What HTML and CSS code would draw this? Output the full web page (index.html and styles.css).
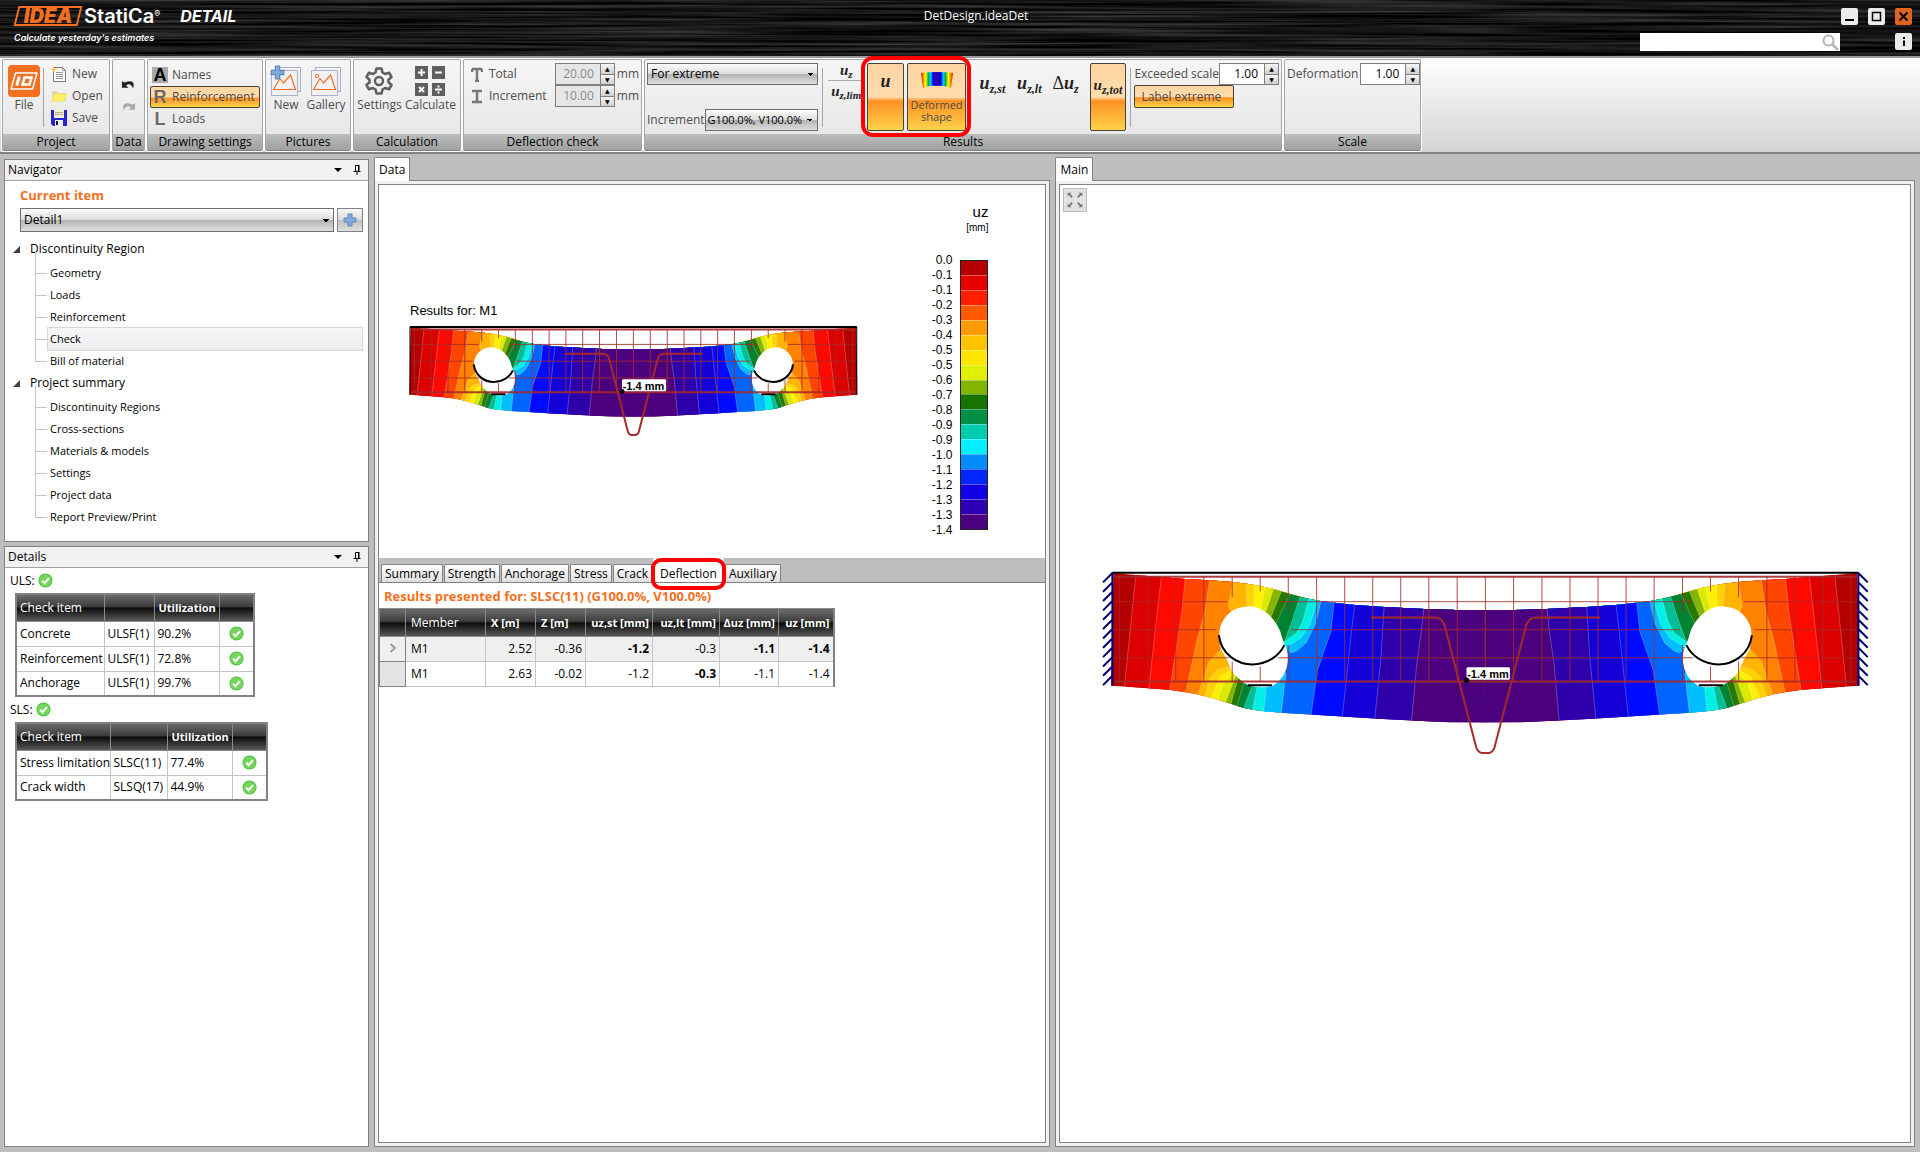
FILE: index.html
```html
<!DOCTYPE html>
<html lang="en">
<head>
<meta charset="utf-8">
<title>DetDesign.ideaDet</title>
<link rel="stylesheet" href="styles.css">
</head>
<body>
<svg class="defs" aria-hidden="true">
  <defs>
    <clipPath id="body-clip">
      <path d="M73,70 L140,76 217,82 290,88 361,92 430,97 472,102 515,110 552,118 580,126 612,136 650,146 692,154 735,159 797,166 884,172 1004,178 1100,181 H1189 V518 L1080,517 966,512 854,506 758,500 664,494 575,489 523,484 490,480 460,474 442,468 425,462 408,457 386,450 362,443 323,433 290,427 240,420 178,415 105,410 66,408 Z"/>
    </clipPath>
    <g id="half-beam">
      <g clip-path="url(#body-clip)">
        <path fill="#b40000" d="M60,60H1200V530H60z"/>
        <g class="bands">
          <path fill="#dc0000" d="M141,60 L139,90 105,420 H1200 V60z"/>
          <path fill="#ff0a00" d="M218,60 L216,90 207,165 178,425 H1200 V60z"/>
          <path fill="#ff4600" d="M291,60 L288,90 278,190 240,430 H1200 V60z"/>
          <path fill="#ff8200" d="M362,60 L360,100 346,190 325,265 287,440 H1200 V60z"/>
          <path fill="#ffb400" d="M432,60 L430,97 418,170 480,290 396,297 360,335 323,445 H1200 V60z"/>
          <path fill="#ffd200" d="M470,60 V102 L476,180 500,290 422,351 385,360 362,385 345,450 H1200 V60z"/>
          <path fill="#fff000" d="M496,60 V106 L492,180 500,290 425,362 395,378 362,450 H1200 V60z"/>
          <path fill="#dcea00" d="M530,60 L527,112 514,180 500,290 430,374 402,398 384,458 H1200 V60z"/>
          <path fill="#82b400" d="M553,60 V118 L530,185 500,290 440,376 406,466 H1200 V60z"/>
          <path fill="#287800" d="M576,60 V126 L544,205 500,290 447,385 423,470 H1200 V60z"/>
          <path fill="#008232" d="M602,60 V132 L560,222 500,290 467,390 440,478 H1200 V60z"/>
          <path fill="#00be96" d="M634,60 L632,141 608,215 584,280 500,300 490,405 460,484 H1200 V60z"/>
          <path fill="#00f0e6" d="M662,60 L658,148 640,215 622,250 585,276 500,300 505,405 488,490 H1200 V60z"/>
          <path fill="#00beff" d="M688,60 L684,152 662,225 635,265 590,292 500,300 532,400 522,496 H1200 V60z"/>
          <path fill="#0064ff" d="M700,60 L695,155 680,220 650,280 622,304 605,309 594,300 500,310 590,370 575,500 H1200 V60z"/>
          <path fill="#000aff" d="M737,60 L734,160 725,245 685,360 664,504 H1200 V60z"/>
          <path fill="#1400d7" d="M799,60 L796,166 787,240 758,510 H1200 V60z"/>
          <path fill="#2d00aa" d="M884,60 V172 L875,320 854,530 H1200 V60z"/>
          <path fill="#4b007d" d="M1003,60 V178 L995,250 982,340 965,530 H1200 V60z"/>
        </g>
        <path fill="#fff" d="M475,170 C515,168 555,200 573,245 Q580,270 586,285 Q598,305 596,335 Q590,385 552,407 Q525,418 478,407 Q450,392 428,364 Q412,325 396,300 Q386,262 393,232 C405,195 435,170 475,170z"/>
      </g>
      <path class="outline" d="M389,256 C396,315 445,344 490,344 C535,343 570,318 585,286 M476,406 H548"/>
      <path class="grid" d="M92,80V395 M176,80V395 M260,80V395 M344,80V395 M429,80V142 M429,335V395 M513,80V125 M513,350V395 M597,80V190 M597,285V395 M682,80V395 M766,80V395 M850,80V395 M934,80V395 M1018,80V395 M1103,80V395 M78,156H414 M568,156H1188 M78,240H382 M605,240H1188 M78,324H420 M565,324H1188"/>
      <path class="bar" d="M78,81H1188 M78,395H1188"/>
      <path class="tendon" d="M844,203 H1035 Q1060,203 1067,233 L1160,592 Q1165,608 1177,609 H1188"/>
    </g>
    <g id="beam">
      <use href="#half-beam"/>
      <use href="#half-beam" transform="translate(2375 0) scale(-1 1)"/>
      <path class="grid" d="M1187.500,80V395"/>
      <path class="outline" d="M70,69H2305"/>
    </g>
    <g id="support">
      <path class="hinge" d="M70,68V408 M70,70L42,98 M70,98L42,126 M70,126L42,154 M70,154L42,182 M70,182L42,210 M70,210L42,238 M70,238L42,266 M70,266L42,294 M70,294L42,322 M70,322L42,350 M70,350L42,378 M70,378L42,406"/>
    </g>
    <symbol id="ok" viewBox="0 0 16 16">
      <circle cx="8" cy="8" r="7.500" fill="#4cc13c"/>
      <circle cx="8" cy="8" r="6.500" fill="#76d65c"/>
      <path d="M4.500,8.200L7,10.800L11.700,5.500" fill="none" stroke="#fff" stroke-width="2.200"/>
    </symbol>
    <symbol id="pin" viewBox="0 0 10 12">
      <path d="M3.500,7V1.500H6.500V7M1.500,7.500H8.500M5,8V11" fill="none" stroke="#000"/><path d="M6,1H7.500V7H6z"/>
    </symbol>
    <symbol id="picture" viewBox="0 0 32 32">
      <path d="M5.500,5.500V2.500H30.500V26.500H27.500" fill="none" stroke="#a9afc4"/>
      <path d="M1.500,5.500H27.500V30.500H1.500z" fill="#f1f1f4" stroke="#a9afc4"/>
      <path d="M3.500,24.500L10,13.500L13.500,18L20.500,10L25.500,24.500z" fill="none" stroke="#f36f21" stroke-width="1.200"/>
    </symbol>
    <symbol id="plus" viewBox="0 0 14 14">
      <path d="M5,1H9V5H13V9H9V13H5V9H1V5H5z" fill="#7fabdc" stroke="#5b87bd"/>
    </symbol>
  </defs>
</svg>

<header class="titlebar">
  <svg class="brushed" aria-hidden="true">
    <filter id="brush" x="0" y="0" width="100%" height="100%" color-interpolation-filters="sRGB">
      <feTurbulence type="fractalNoise" baseFrequency="0.004 0.350" numOctaves="3" seed="5"/>
      <feColorMatrix values="0.420 0 0 0 -0.120 0.420 0 0 0 -0.120 0.420 0 0 0 -0.120 0 0 0 0 1"/>
    </filter>
    <rect width="100%" height="100%" filter="url(#brush)"/>
  </svg>
  <div class="brand">
    <div class="brand-line"><span class="logo-box">IDEA</span><span class="logo-name">StatiCa<sup>®</sup></span><span class="logo-app">DETAIL</span></div>
    <div class="tagline">Calculate yesterday's estimates</div>
  </div>
  <h1 class="doc-title">DetDesign.ideaDet</h1>
  <div class="window-tools">
    <div class="window-row">
      <button class="win" aria-label="Minimize"><svg viewBox="0 0 17 17"><path d="M4,12H13" stroke="#000" stroke-width="2"/></svg></button>
      <button class="win" aria-label="Maximize"><svg viewBox="0 0 17 17"><path d="M4.500,4.500H12.500V12.500H4.500z" fill="none" stroke="#000" stroke-width="1.500"/></svg></button>
      <button class="win win-close" aria-label="Close"><svg viewBox="0 0 17 17"><path d="M4.500,4.500L12.500,12.500M12.500,4.500L4.500,12.500" stroke="#000" stroke-width="2"/></svg></button>
    </div>
    <div class="window-row search-row">
      <label class="search"><input type="text" aria-label="Search"><svg viewBox="0 0 17 17"><circle cx="6.500" cy="6.500" r="5" fill="none" stroke="#b4b4b4" stroke-width="2"/><path d="M10,10L16,16" stroke="#b4b4b4" stroke-width="2.500"/></svg></label>
      <button class="win" aria-label="Info"><svg viewBox="0 0 17 17"><path d="M9,4V6M9,7.500V13" stroke="#000" stroke-width="2"/></svg></button>
    </div>
  </div>
</header>

<section class="ribbon" aria-label="Ribbon">
  <section class="group g-project">
    <div class="group-body">
      <button class="big"><svg viewBox="0 0 32 32"><rect width="32" height="32" rx="4" fill="#f36f21"/><path d="M7.500,8H29L24.500,24H3z" fill="none" stroke="#fff" stroke-width="1.500" stroke-linejoin="round"/><path d="M11.300,11.500L8.800,20.500" stroke="#fff" stroke-width="3"/><path d="M16.500,12.500H23.500L21.500,19.500H14.500z" fill="none" stroke="#fff" stroke-width="2.600"/></svg>File</button>
      <span class="sep"></span>
      <div class="stack">
        <button class="small"><svg viewBox="0 0 16 16"><path d="M2.500,1.500H11.500L14.500,4.500V15.500H2.500z" fill="#fafafa" stroke="#777"/><path d="M11.500,1.500V4.500H14.500M5,6.500H12M5,8.500H12M5,10.500H12M5,12.500H12" fill="none" stroke="#999"/><path d="M3,0L4,2.500L7,3L4,4L3,7L2,4L-1,3L2,2.500z" fill="#ffc83c"/></svg>New</button>
        <button class="small"><svg viewBox="0 0 16 16"><path d="M1,3H6L8,5H15V13H1z" fill="#e8d9a0"/><path d="M3,6H16L13,13.500H0z" fill="#fbf067" stroke="#e5dc6a" stroke-width=".5"/></svg>Open</button>
        <button class="small"><svg viewBox="0 0 16 16"><path d="M0,0H16V16H2L0,14z" fill="#2323d2"/><path d="M3,0H13V8H3z" fill="#f4efcf"/><path d="M4,2.500H12M4,4.500H12" stroke="#b5ad85"/><path d="M4,10H12V16H4z" fill="#eee"/><path d="M5,11H7V15H5z" fill="#111"/></svg>Save</button>
      </div>
    </div>
    <h2>Project</h2>
  </section>
  <section class="group g-data">
    <div class="group-body undo">
      <button class="icon" aria-label="Undo"><svg viewBox="0 0 16 12"><path d="M1,3V10H8L5.500,7.500Q10,4 13,11Q16,0 4,4.500z" fill="#222"/></svg></button>
      <button class="icon" aria-label="Redo"><svg viewBox="0 0 16 12"><path d="M15,3V10H8L10.500,7.500Q6,4 3,11Q0,0 12,4.500z" fill="#aaa"/></svg></button>
    </div>
    <h2>Data</h2>
  </section>
  <section class="group g-draw">
    <div class="group-body">
      <div class="stack toggles">
        <button class="small"><span class="glyph glyph-a">A</span>Names</button>
        <button class="small active"><span class="glyph">R</span>Reinforcement</button>
        <button class="small"><span class="glyph">L</span>Loads</button>
      </div>
    </div>
    <h2>Drawing settings</h2>
  </section>
  <section class="group g-pics">
    <div class="group-body">
      <button class="big"><svg viewBox="0 0 32 32"><use href="#picture"/><use href="#plus" width="15" height="15"/></svg>New</button>
      <button class="big"><svg viewBox="0 0 32 32"><use href="#picture"/><circle cx="7" cy="11" r="1.800" fill="none" stroke="#f36f21"/></svg>Gallery</button>
    </div>
    <h2>Pictures</h2>
  </section>
  <section class="group g-calc">
    <div class="group-body">
      <button class="big"><svg viewBox="0 0 32 32"><path d="M13.500,3.500H18.500L19.500,7.500L22,9L26,7.700L28.500,12L25.500,14.700V17.300L28.500,20L26,24.300L22,23L19.500,24.500L18.500,28.500H13.500L12.500,24.500L10,23L6,24.300L3.500,20L6.500,17.300V14.700L3.500,12L6,7.700L10,9L12.500,7.500z" fill="none" stroke="#5f5f5f" stroke-width="2.600" stroke-linejoin="round"/><circle cx="16" cy="16" r="4" fill="none" stroke="#5f5f5f" stroke-width="2.400"/></svg>Settings</button>
      <button class="big"><svg viewBox="0 0 32 32"><path d="M1,1H14V14H1zM18,1H31V14H18zM1,18H14V31H1zM18,18H31V31H18z" fill="#5f5f5f"/><path d="M4,7.500H11M7.500,4V11M21,7.500H28M5,22L10,27M10,22L5,27M21,24.500H28M24.500,20.500V22.500M24.500,26.500V28.500" stroke="#fff" stroke-width="2"/></svg>Calculate</button>
    </div>
    <h2>Calculation</h2>
  </section>
  <section class="group g-defl">
    <div class="group-body fields">
      <div class="field"><svg viewBox="0 0 12 16"><path d="M1,3V6M11,3V6M1,3H11M6,3V15M4,15H8" fill="none" stroke="#777" stroke-width="2.500"/></svg><label for="total">Total</label><span class="spin off"><input id="total" type="text" value="20.00" disabled><span class="arrows"><button aria-label="Increase">▲</button><button aria-label="Decrease">▼</button></span></span>mm</div>
      <div class="field"><svg viewBox="0 0 12 16"><path d="M1,3H11M1,14H11M6,3V14" fill="none" stroke="#777" stroke-width="2.500"/></svg><label for="incr">Increment</label><span class="spin off"><input id="incr" type="text" value="10.00" disabled><span class="arrows"><button aria-label="Increase">▲</button><button aria-label="Decrease">▼</button></span></span>mm</div>
    </div>
    <h2>Deflection check</h2>
  </section>
  <section class="group g-results">
    <div class="group-body">
      <div class="combos">
        <select aria-label="Show"><option>For extreme</option></select>
        <div class="combo-row"><label for="increment">Increment</label><select id="increment"><option>G100.0%, V100.0%</option></select></div>
      </div>
      <span class="sep"></span>
      <button class="math ratio"><span>u<sub>z</sub></span><span>u<sub>z,lim</sub></span></button>
      <div class="callout callout-ribbon">
        <button class="math tall active">u</button>
        <button class="tall deformed active"><svg viewBox="0 0 32 16"><defs><linearGradient id="rainbow"><stop offset="0" stop-color="#e00"/><stop offset=".14" stop-color="#ff0"/><stop offset=".24" stop-color="#0a4"/><stop offset=".3" stop-color="#0cf"/><stop offset=".38" stop-color="#00f"/><stop offset=".5" stop-color="#40008c"/><stop offset=".62" stop-color="#00f"/><stop offset=".7" stop-color="#0cf"/><stop offset=".76" stop-color="#0a4"/><stop offset=".86" stop-color="#ff0"/><stop offset="1" stop-color="#e00"/></linearGradient></defs><path d="M0,1Q16,-1 32,1L30,16Q24,13 16,14Q8,13 2,16z" fill="url(#rainbow)"/></svg><span>Deformed<br>shape</span></button>
      </div>
      <button class="math">u<sub>z,st</sub></button>
      <button class="math">u<sub>z,lt</sub></button>
      <button class="math delta"><i>Δ</i>u<sub>z</sub></button>
      <button class="math tall total active">u<sub>z,tot</sub></button>
      <span class="sep"></span>
      <div class="scale-box">
        <div class="field"><label for="scale">Exceeded scale</label><span class="spin"><input id="scale" type="text" value="1.00"><span class="arrows"><button aria-label="Increase">▲</button><button aria-label="Decrease">▼</button></span></span></div>
        <button class="label-extreme active">Label extreme</button>
      </div>
    </div>
    <h2>Results</h2>
  </section>
  <section class="group g-scale">
    <div class="group-body">
      <div class="field"><label for="deform">Deformation</label><span class="spin"><input id="deform" type="text" value="1.00"><span class="arrows"><button aria-label="Increase">▲</button><button aria-label="Decrease">▼</button></span></span></div>
    </div>
    <h2>Scale</h2>
  </section>
</section>

<main class="workspace">
  <aside class="side">
    <section class="panel navigator">
      <header><h2>Navigator</h2><i class="caret"></i><svg class="pin"><use href="#pin"/></svg></header>
      <div class="nav-body">
        <label class="orange" for="item">Current item</label>
        <div class="item-row"><select id="item"><option>Detail1</option></select><button aria-label="Add item"><svg><use href="#plus"/></svg></button></div>
        <nav>
          <h3>Discontinuity Region</h3>
          <ul>
            <li><a href="#">Geometry</a></li>
            <li><a href="#">Loads</a></li>
            <li><a href="#">Reinforcement</a></li>
            <li><a href="#" class="current">Check</a></li>
            <li><a href="#">Bill of material</a></li>
          </ul>
          <h3 class="second">Project summary</h3>
          <ul>
            <li><a href="#">Discontinuity Regions</a></li>
            <li><a href="#">Cross-sections</a></li>
            <li><a href="#">Materials &amp; models</a></li>
            <li><a href="#">Settings</a></li>
            <li><a href="#">Project data</a></li>
            <li><a href="#">Report Preview/Print</a></li>
          </ul>
        </nav>
      </div>
    </section>
    <section class="panel details">
      <header><h2>Details</h2><i class="caret"></i><svg class="pin"><use href="#pin"/></svg></header>
      <div class="details-body">
        <p>ULS: <svg class="ok"><use href="#ok"/></svg></p>
        <table class="checks">
          <colgroup><col class="w-86"><col class="w-50"><col class="w-65"><col class="w-35"></colgroup>
          <thead><tr><th>Check item</th><th></th><th class="strong">Utilization</th><th></th></tr></thead>
          <tbody>
            <tr><td>Concrete</td><td>ULSF(1)</td><td>90.2%</td><td><svg class="ok"><use href="#ok"/></svg></td></tr>
            <tr><td>Reinforcement</td><td>ULSF(1)</td><td>72.8%</td><td><svg class="ok"><use href="#ok"/></svg></td></tr>
            <tr><td>Anchorage</td><td>ULSF(1)</td><td>99.7%</td><td><svg class="ok"><use href="#ok"/></svg></td></tr>
          </tbody>
        </table>
        <p>SLS: <svg class="ok"><use href="#ok"/></svg></p>
        <table class="checks">
          <colgroup><col class="w-92"><col class="w-57"><col class="w-65"><col class="w-35"></colgroup>
          <thead><tr><th>Check item</th><th></th><th class="strong">Utilization</th><th></th></tr></thead>
          <tbody>
            <tr><td>Stress limitation</td><td>SLSC(11)</td><td>77.4%</td><td><svg class="ok"><use href="#ok"/></svg></td></tr>
            <tr><td>Crack width</td><td>SLSQ(17)</td><td>44.9%</td><td><svg class="ok"><use href="#ok"/></svg></td></tr>
          </tbody>
        </table>
      </div>
    </section>
  </aside>

  <section class="pane">
    <button class="pane-tab">Data</button>
    <div class="pane-frame"><div class="pane-inner">
      <div class="chart">
        <figure class="chart-beam">
          <figcaption>Results for: M1</figcaption>
          <svg class="beam" viewBox="30 64 2316 552">
            <use href="#beam"/>
            <path class="outline edge" d="M70,68V408M2305,68V408"/>
            <rect x="1131" y="330" width="220" height="60" rx="6" fill="#fff"/>
            <circle cx="1131" cy="391" r="12"/>
            <text x="1134" y="382" class="tag tag-small">-1.4 mm</text>
          </svg>
        </figure>
        <div class="legend">
          <p class="legend-name">uz</p>
          <p class="legend-unit">[mm]</p>
          <div class="legend-body">
            <ol><li>0.0</li><li>-0.1</li><li>-0.1</li><li>-0.2</li><li>-0.3</li><li>-0.4</li><li>-0.5</li><li>-0.5</li><li>-0.6</li><li>-0.7</li><li>-0.8</li><li>-0.9</li><li>-0.9</li><li>-1.0</li><li>-1.1</li><li>-1.2</li><li>-1.3</li><li>-1.3</li><li>-1.4</li></ol>
            <div class="swatches">
              <i style="background:#b40000"></i><i style="background:#e60000"></i><i style="background:#ff1e00"></i><i style="background:#ff5a00"></i><i style="background:#ff9b00"></i><i style="background:#ffc300"></i><i style="background:#ffe600"></i><i style="background:#e1f000"></i><i style="background:#82b400"></i><i style="background:#197300"></i><i style="background:#009146"></i><i style="background:#00cdaf"></i><i style="background:#00f0ff"></i><i style="background:#008cff"></i><i style="background:#0028ff"></i><i style="background:#1400e6"></i><i style="background:#2d00b4"></i><i style="background:#4b0082"></i>
            </div>
          </div>
        </div>
      </div>
      <div class="tabs">
        <button>Summary</button><button>Strength</button><button>Anchorage</button><button>Stress</button><button>Crack</button><span class="callout callout-tab"><button class="selected">Deflection</button></span><button>Auxiliary</button>
      </div>
      <h3 class="orange results-title">Results presented for: SLSC(11) (G100.0%, V100.0%)</h3>
      <table class="results">
        <colgroup><col class="w-25"><col class="w-80"><col class="w-50"><col class="w-50"><col class="w-67"><col class="w-67"><col class="w-60"><col class="w-55"></colgroup>
        <thead><tr><th></th><th class="left">Member</th><th class="left strong">X [m]</th><th class="left strong">Z [m]</th><th class="strong">uz,st [mm]</th><th class="strong">uz,lt [mm]</th><th class="strong">Δuz [mm]</th><th class="strong">uz [mm]</th></tr></thead>
        <tbody>
          <tr class="focus"><td class="handle"><svg viewBox="0 0 8 10"><path d="M1.500,1L6,5L1.500,9" fill="none" stroke="#999" stroke-width="1.800"/></svg></td><td class="left">M1</td><td>2.52</td><td>-0.36</td><td><b>-1.2</b></td><td>-0.3</td><td><b>-1.1</b></td><td><b>-1.4</b></td></tr>
          <tr><td class="handle"></td><td class="left">M1</td><td>2.63</td><td>-0.02</td><td>-1.2</td><td><b>-0.3</b></td><td>-1.1</td><td>-1.4</td></tr>
        </tbody>
      </table>
    </div></div>
  </section>

  <section class="pane">
    <button class="pane-tab">Main</button>
    <div class="pane-frame"><div class="pane-inner viewer">
      <button class="expand" aria-label="Zoom to fit"><svg viewBox="0 0 24 24"><path d="M4,4H8L4,8zM20,4H16L20,8zM4,20H8L4,16zM20,20H16L20,16z" fill="#777"/><path d="M5,5L9,9M19,5L15,9M5,19L9,15M19,19L15,15" stroke="#777" stroke-width="2"/></svg></button>
      <svg class="beam" viewBox="30 64 2316 552">
        <use href="#beam"/>
        <use href="#support"/>
        <use href="#support" transform="translate(2375 0) scale(-1 1)"/>
        <rect x="1131" y="352" width="130" height="38" rx="4" fill="#fff"/>
        <circle cx="1131" cy="391" r="8"/>
        <text x="1133" y="384" class="tag">-1.4 mm</text>
      </svg>
    </div></div>
  </section>
</main>
</body>
</html>
```
FILE: styles.css
```css
* { box-sizing: border-box; }
body {
  margin: 0;
  min-height: 100vh;
  display: flex;
  flex-direction: column;
  background: #bebebe;
  font: 12px/16px "Open Sans", "Noto Sans", sans-serif;
  color: #000;
}
h1, h2, h3, p, ul, ol, figure { margin: 0; padding: 0; font-size: 12px; font-weight: normal; list-style: none; }
button, input, select { font: inherit; color: inherit; margin: 0; padding: 0; border: 0; background: none; border-radius: 0; }
a { color: inherit; text-decoration: none; }
.defs { position: absolute; width: 0; height: 0; }

/* title bar */
.titlebar {
  position: relative;
  height: 56px;
  display: grid;
  grid-template-columns: 1fr auto 1fr;
  background: #161616;
  color: #fff;
}
.brushed { position: absolute; inset: 0; width: 100%; height: 100%; }
.brand, .doc-title, .window-tools { position: relative; }
.brand { padding: 6px 0 0 14px; }
.brand-line { display: flex; align-items: center; height: 20px; }
.logo-box {
  position: relative;
  width: 68px;
  text-align: center;
  font: italic 900 20px/20px Inter, sans-serif;
  color: #f36f21;
}
.logo-box::before { content: ""; position: absolute; inset: 0 2px; border: 2px solid #f36f21; transform: skewX(-14deg); }
.logo-name { margin-left: 2px; font: 600 20px/20px Inter, sans-serif; }
.logo-name sup { font-size: 9px; line-height: 0; vertical-align: 6px; font-weight: 400; }
.logo-app { margin-left: 20px; font: italic 700 16px/20px Inter, sans-serif; }
.tagline { margin-top: 4px; font: italic 600 9px/16px Inter, sans-serif; }
.doc-title { padding: 8px 0 0 32px; }
.window-tools { display: flex; flex-direction: column; align-items: flex-end; gap: 8px; padding: 8px 8px 0 0; }
.window-row { display: flex; gap: 10px; }
.search-row { gap: 55px; }
.win { width: 17px; height: 17px; border-radius: 2px; background: #ebebeb; }
.win-close { background: #e0641e; }
.win svg { display: block; width: 17px; height: 17px; }
.search { display: flex; width: 200px; height: 18px; background: #fff; padding: 1px 1px 0 0; }
.search input { flex: 1; min-width: 0; }
.search svg { width: 17px; height: 17px; }

/* ribbon */
.ribbon {
  display: flex;
  align-items: flex-start;
  gap: 2px;
  height: 98px;
  padding: 1px 0 0 2px;
  border-top: 2px solid #9a9a9a;
  border-bottom: 2px solid #828282;
  background: linear-gradient(#fff, #d4d4d4);
  color: #4c4c4c;
}
.group {
  display: flex;
  flex-direction: column;
  flex: none;
  height: 92px;
  border: 1px solid #a4a4a4;
  border-bottom-color: #828282;
  border-radius: 2px;
  background: linear-gradient(#f6f6f6, #e6e4e4);
  box-shadow: 0 0 0 1px #fff;
}
.group h2 {
  height: 16px;
  line-height: 16px;
  text-align: center;
  color: #000;
  background: linear-gradient(#bcbebd, #9fa1a0);
}
.group-body { flex: 1; display: flex; align-items: flex-start; padding: 3px 2px 0; min-height: 0; }
.g-project { width: 108px; }
.g-data { width: 33px; }
.g-draw { width: 116px; }
.g-pics { width: 86px; }
.g-calc { width: 108px; }
.g-defl { width: 179px; }
.g-results { width: 638px; }
.g-scale { width: 137px; }
.sep { width: 1px; height: 59px; margin-top: 5px; background: #a6a6a6; }
.big { display: flex; flex-direction: column; align-items: center; flex: 1; padding-top: 2px; line-height: 16px; }
.big svg { width: 32px; height: 32px; }
.g-project .big { flex: none; width: 38px; }
.g-pics .group-body, .g-calc .group-body { padding: 3px 4px 0 0; }
.stack { display: flex; flex-direction: column; padding-left: 7px; }
.small { display: flex; align-items: center; gap: 5px; height: 22px; }
.small svg { width: 16px; height: 16px; overflow: visible; }
.toggles { flex: 1; padding: 1px 0 0; }
.toggles .small { gap: 4px; padding-left: 1px; border: 1px solid transparent; }
.glyph { width: 16px; height: 16px; font: 700 18px/16px "Liberation Sans", sans-serif; color: #6a6a6a; text-align: center; }
.glyph-a { background: #a8a8a8; color: #000; }
.ribbon .active {
  border: 1px solid #4a4234;
  border-radius: 2px;
  background: linear-gradient(#fcd4a0, #ffdcae 50%, #ff9124 56%, #ffd24a);
}
.undo { flex-direction: column; align-items: center; gap: 10px; padding-top: 18px; }
.icon, .icon svg { display: block; width: 15px; height: 12px; }
.fields { flex-direction: column; }
.field { display: flex; align-items: center; height: 22px; gap: 2px; white-space: nowrap; }
.fields .field { width: 100%; padding-left: 5px; }
.fields label { flex: 1; padding-left: 4px; }
.fields svg { width: 12px; height: 16px; }
.spin { display: flex; width: 60px; height: 22px; border: 1px solid #7e7e7e; background: #fff; color: #000; }
.spin input { flex: 1; min-width: 0; text-align: right; padding-right: 6px; }
.spin.off, .spin.off input { background: #e6e6e6; color: #8a8a8a; }
.arrows { display: flex; flex-direction: column; width: 14px; border-left: 1px solid #7e7e7e; }
.arrows button { flex: 1; height: 10px; font: 6px/9px "DejaVu Sans", sans-serif; color: #000; background: linear-gradient(#f6f6f6, #cfcfcf); }
.arrows button + button { border-top: 1px solid #7e7e7e; }
select {
  appearance: none;
  height: 22px;
  padding: 0 12px 0 3px;
  border: 1px solid #6e6e6e;
  color: #000;
  background:
    linear-gradient(to bottom left, #000 50%, transparent 50%) right 7px center / 3px 3px no-repeat,
    linear-gradient(to bottom right, #000 50%, transparent 50%) right 4px center / 3px 3px no-repeat,
    linear-gradient(#fdfdfd, #dcdcdc 49%, #b2b2b2 51%, #dedede);
}
.combos { display: flex; flex-direction: column; justify-content: space-between; width: 172px; height: 68px; }
.combo-row { display: flex; align-items: center; }
.combo-row select { flex: 1; min-width: 0; padding: 0 12px 0 2px; font-size: 11px; }
.g-results .sep { margin-left: 4px; }
.math { font: italic 700 18px/22px "Liberation Serif", serif; color: #222; width: 37px; height: 68px; padding: 0 0 28px; white-space: nowrap; text-align: center; }
.math sub { font-size: 12px; line-height: 0; vertical-align: -4px; }
.math i { font-style: normal; font-weight: 400; }
.ratio { display: flex; flex-direction: column; width: 44px; padding: 0 2px 0 5px; font-size: 15px; line-height: 19px; }
.ratio span { width: 36px; height: 17px; line-height: 14px; }
.ratio span + span { border-top: 1px solid #aaa; line-height: 20px; }
.ratio sub { font-size: 11px; vertical-align: -3px; }
.tall { width: 37px; }
.tall.math { padding-bottom: 32px; }
.math.total { margin-left: 6px; padding: 0 0 25px; font-size: 15px; }
.deformed { width: 59px; font-size: 11px; line-height: 12px; display: flex; flex-direction: column; align-items: center; gap: 11px; height: 68px; padding-top: 8px; }
.deformed svg { width: 32px; height: 16px; flex: none; }
.delta { width: 36px; }
.callout { position: relative; }
.callout::after { content: ""; position: absolute; z-index: 2; border: 4px solid #f00; border-radius: 12px; pointer-events: none; }
.callout-ribbon { display: flex; gap: 3px; margin-right: 8px; }
.callout-ribbon::after { inset: -7px -5px -6px -6px; }
.scale-box { padding-left: 3px; }
.scale-box .field { gap: 0; }
.label-extreme { display: block; width: 100px; height: 23px; padding-left: 6px; text-align: left; }
.g-scale .group-body { justify-content: space-between; }
.g-scale .field { flex: 1; justify-content: space-between; }

/* workspace */
.workspace {
  flex: 1;
  display: grid;
  grid-template-columns: 365px minmax(0, 676fr) minmax(0, 859fr);
  gap: 5px;
  padding: 3px 5px 5px 4px;
}
.side { display: flex; flex-direction: column; gap: 4px; padding-top: 2px; }
.panel { border: 1px solid #828282; background: #fff; }
.navigator { height: 383px; }
.details { flex: 1; }
.panel > header {
  display: flex;
  align-items: center;
  height: 21px;
  padding: 0 6px 0 3px;
  border-bottom: 1px solid #a0a0a0;
  background: #f1f1f1;
}
.panel > header h2 { flex: 1; }
.caret { border: 4px solid transparent; border-top-color: #000; border-bottom: 0; }
.pin { width: 10px; height: 12px; margin-left: 10px; }
.nav-body { padding: 5px 5px 0 15px; }
.orange { color: #f36f21; font-weight: 700; font-size: 13px; }
.nav-body > label { display: block; line-height: 18px; }
.item-row { display: flex; gap: 3px; margin-top: 4px; }
.item-row select { flex: 1; height: 24px; }
.item-row button { width: 26px; height: 24px; border: 1px solid #828282; background: linear-gradient(#f6f6f6, #dcdcdc 49%, #c0c0c0 51%, #dedede); }
.item-row svg { display: block; width: 14px; height: 14px; margin: auto; }
nav h3 { height: 24px; padding: 9px 0 0 10px; position: relative; }
nav h3::before { content: ""; position: absolute; left: -7px; top: 14px; border: solid #404040; border-width: 0 0 7px 7px; border-left-color: transparent; }
nav ul { margin-left: 15px; padding-top: 6px; font-size: 11px; }
nav .second { height: 18px; padding-top: 3px; }
nav .second::before { top: 8px; }
nav li { display: flex; align-items: center; height: 22px; position: relative; }
nav li::before { content: ""; width: 11px; height: 22px; margin-bottom: 22px; border: solid #c4c4c4; border-width: 0 0 1px 1px; }
nav a { flex: 1; height: 24px; line-height: 22px; padding-left: 2px; border: 1px solid transparent; }
nav .current { background: linear-gradient(#f6f6f8, #ededee); border-color: #d8d8da; }
.details-body { padding: 3px 10px; }
.details-body p { display: flex; align-items: center; gap: 3px; height: 19px; margin-left: -5px; }
.ok { display: block; width: 15px; height: 15px; }
table { border-collapse: collapse; table-layout: fixed; }
th {
  height: 27px;
  padding: 0 4px;
  color: #fff;
  font-weight: 400;
  border: 1px solid #8a8a8a;
  background: linear-gradient(#6a6a6a, #3c3c3c 45%, #0c0c0c 50%, #5a5a5a);
  text-align: left;
  white-space: nowrap;
}
.strong { font-weight: 700; font-size: 11px; }
td { height: 25px; padding: 0 3px; border: 1px solid #c4c4c4; white-space: nowrap; }
.checks { width: 0; margin: 3px 0; border: 2px solid #828282; }
.checks th:first-child, .checks td:first-child { padding: 0 0 0 3px; }
.checks td .ok { margin: auto; }
.w-25 { width: 26px; } .w-35 { width: 35px; } .w-50 { width: 50px; } .w-55 { width: 55px; }
.w-57 { width: 57px; } .w-60 { width: 59px; } .w-65 { width: 65px; } .w-67 { width: 67px; }
.w-80 { width: 80px; } .w-86 { width: 88px; } .w-92 { width: 94px; }

/* document panes */
.pane { display: flex; flex-direction: column; align-items: flex-start; min-width: 0; }
.pane-tab { height: 24px; padding: 0 4px; margin-bottom: -1px; border: 1px solid #828282; border-bottom: 0; border-radius: 2px 2px 0 0; background: #fff; z-index: 1; }
.pane-frame { flex: 1; width: 100%; display: flex; padding: 3px; border: 1px solid #828282; background: #f1f1f1; }
.pane-inner { flex: 1; min-width: 0; border: 1px solid #828282; background: #fff; }
.viewer { position: relative; display: flex; justify-content: center; align-items: center; }
.viewer .beam { width: 91%; }
.beam { display: block; overflow: visible; }
.expand { position: absolute; left: 3px; top: 3px; width: 24px; height: 24px; border: 1px solid #bcbcbc; background: #e2e2e2; }
.expand svg { display: block; }
.bands path { stroke: rgba(255, 255, 255, .25); stroke-width: 1px; vector-effect: non-scaling-stroke; }
.grid, .bar, .tendon, .outline, .hinge { fill: none; vector-effect: non-scaling-stroke; }
.grid { stroke: #a52a2a; stroke-opacity: .85; stroke-width: 1px; }
.bar { stroke: #a52a2a; stroke-width: 2px; stroke-opacity: .9; }
.tendon { stroke: #a52a2a; stroke-width: 2px; }
.outline { stroke: #000; stroke-width: 2px; }
.edge { stroke-width: 1px; }
.hinge { stroke: #000078; stroke-width: 2px; }
.tag { font: 700 33px "Liberation Sans", sans-serif; }
.tag-small { font-size: 55px; }

.chart { display: flex; justify-content: space-between; align-items: flex-start; height: 373px; padding: 19px 57px 0 23px; font-family: "Liberation Sans", sans-serif; }
.chart-beam { width: 463px; padding-top: 99px; }
.chart figcaption { padding-left: 8px; margin-bottom: 7px; font-size: 13px; line-height: 16px; }
.legend { text-align: right; }
.legend-name { font-size: 15px; line-height: 16px; }
.legend-unit { font-size: 10px; line-height: 16px; }
.legend-body { display: flex; gap: 8px; margin-top: 17px; font-size: 11px; }
.legend-body li { height: 15px; line-height: 15px; }
.swatches { display: flex; flex-direction: column; width: 28px; height: 270px; margin-top: 7px; border: 1px solid #222; }
.swatches i { flex: 1; }
.swatches i + i { border-top: 1px solid rgba(255, 255, 255, .35); }

.tabs { display: flex; align-items: flex-end; gap: 1px; height: 25px; padding-left: 2px; border-bottom: 1px solid #828282; background: #bebebe; }
.tabs button { height: 18px; line-height: 16px; padding: 0 3px; border: 1px solid #828282; border-bottom: 0; border-radius: 2px 2px 0 0; background: linear-gradient(#fff, #dedede); }
.tabs .selected { background: #fff; height: 24px; padding: 6px 6px 0; border-color: transparent; }
.callout-tab { display: block; height: 24px; }
.callout-tab::after { inset: 0 -2px -8px -2px; border-radius: 10px; }
.results-title { padding: 4px 5px 0; height: 25px; line-height: 18px; }
.results { width: 0; border: 1px solid #828282; border-left: 0; border-bottom: 0; border-right-width: 2px; }
.results th, .results td { text-align: right; padding: 0 3px; }
.results th { height: 28px; }
.results .left { text-align: left; padding-left: 5px; }
.results .focus td { background: #efefef; }
.results .handle { background: #e4e4e4; text-align: center; border-color: #828282; }
.handle svg { width: 8px; height: 10px; }
```
